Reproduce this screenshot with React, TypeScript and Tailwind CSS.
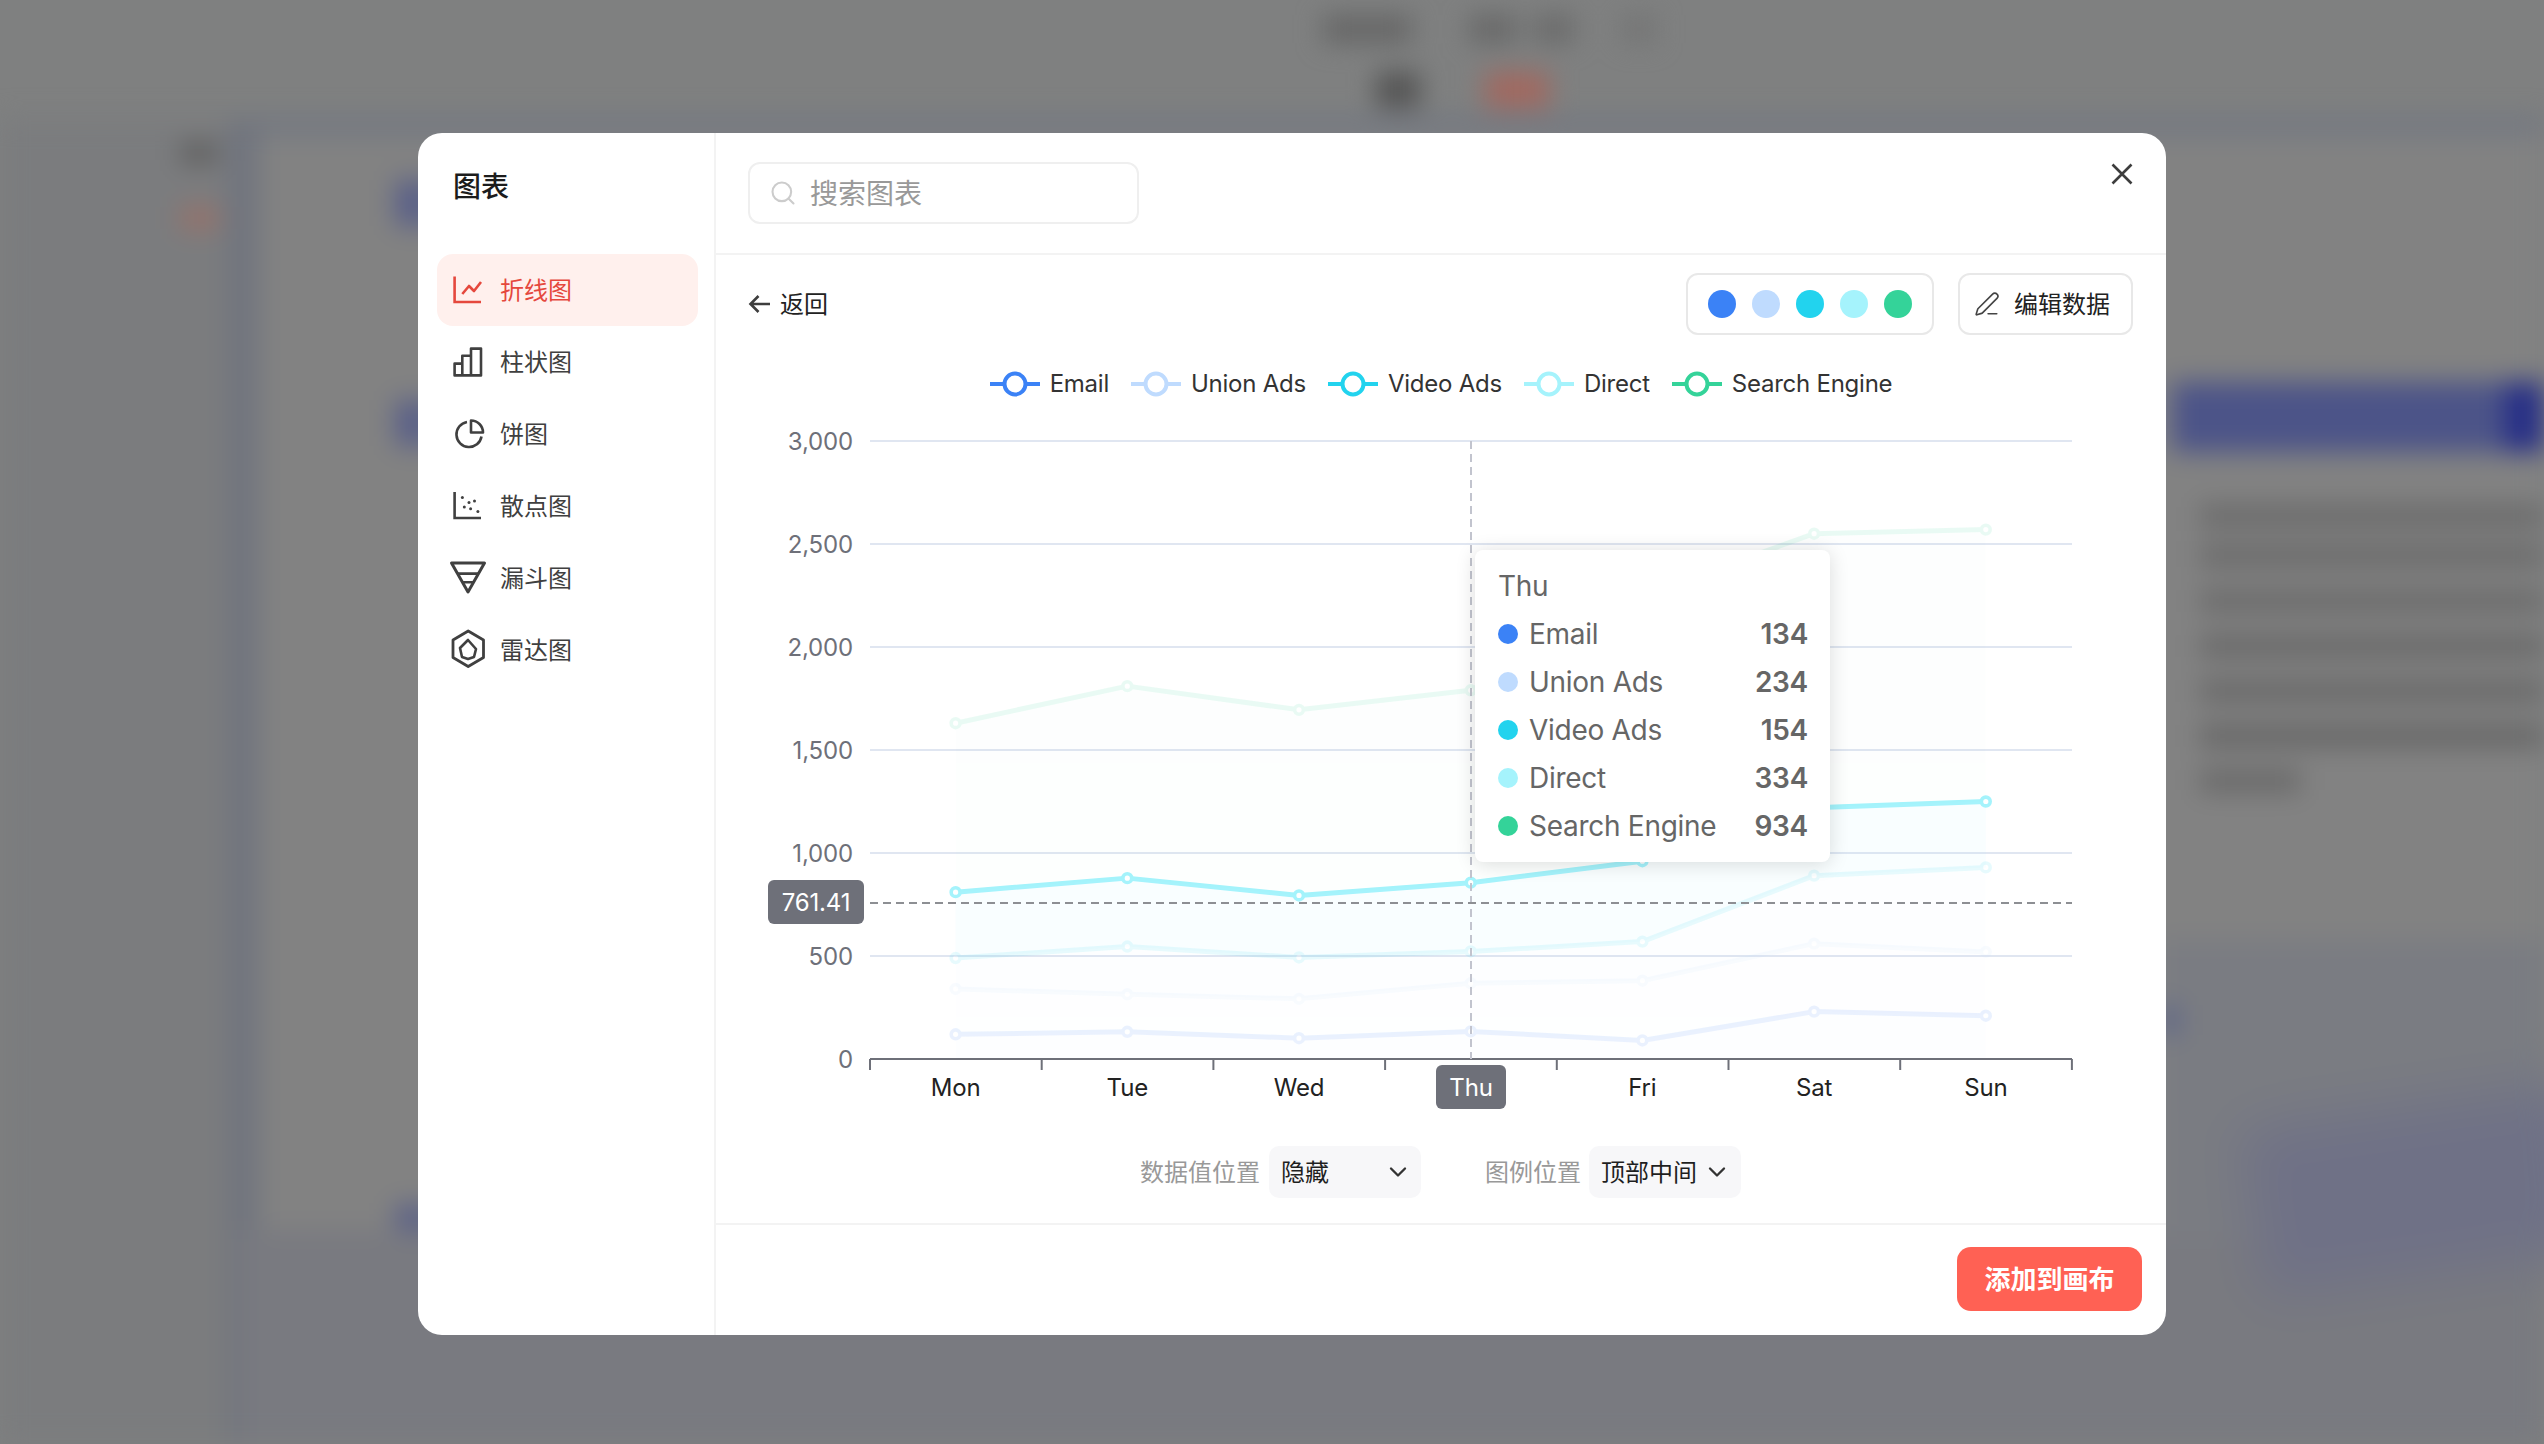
import { ChevronDown, PenLine, Search } from "lucide-react";

const days = ["Mon", "Tue", "Wed", "Thu", "Fri", "Sat", "Sun"];

const series = [
  { name: "Email", color: "#3b82f6", dot: "bg-[#3b82f6]", values: [120, 132, 101, 134, 90, 230, 210], tip: 134 },
  { name: "Union Ads", color: "#bfdbfe", dot: "bg-[#bfdbfe]", values: [220, 182, 191, 234, 290, 330, 310], tip: 234 },
  { name: "Video Ads", color: "#22d3ee", dot: "bg-[#22d3ee]", values: [150, 232, 201, 154, 190, 330, 410], tip: 154 },
  { name: "Direct", color: "#a5f3fc", dot: "bg-[#a5f3fc]", values: [320, 332, 301, 334, 390, 330, 320], tip: 334 },
  { name: "Search Engine", color: "#34d399", dot: "bg-[#34d399]", values: [820, 932, 901, 934, 1290, 1330, 1320], tip: 934 },
];

const xAt = (i: number) => 955.6 + i * 171.7;
const yAt = (v: number) => 1059 - v * 0.206;

// stacked totals per series
const stacked = series.map((_, s) =>
  days.map((_, d) => series.slice(0, s + 1).reduce((sum, row) => sum + row.values[d], 0))
);

function Chart() {
  return (
    <svg width={1450} height={720} viewBox="716 420 1450 720" className="block tracking-[-0.01em]">
      {[0, 500, 1000, 1500, 2000, 2500, 3000].map((v) => (
        <g key={v}>
          {v > 0 && <line x1={870} x2={2072} y1={yAt(v)} y2={yAt(v)} stroke="#e0e6f1" strokeWidth={2} />}
          <text x={853} y={yAt(v)} dy="0.36em" textAnchor="end" fontSize={24} fill="#6e7079">
            {v.toLocaleString("en-US")}
          </text>
        </g>
      ))}

      {series.map((row, s) => {
        const top = stacked[s].map((v, d) => `${xAt(d)},${yAt(v)}`);
        const bottom = s === 0
          ? [`${xAt(6)},${yAt(0)}`, `${xAt(0)},${yAt(0)}`]
          : stacked[s - 1].map((v, d) => `${xAt(d)},${yAt(v)}`).reverse();
        const active = row.name === "Direct";
        return (
          <g key={row.name} opacity={active ? 1 : 0.1}>
            <polygon points={[...top, ...bottom].join(" ")} fill={row.color} fillOpacity={active ? 0.07 : 0.08} />
            <polyline points={top.join(" ")} fill="none" stroke={row.color} strokeWidth={5} strokeLinejoin="round" />
            {stacked[s].map((v, d) => (
              <circle key={d} cx={xAt(d)} cy={yAt(v)} r={4.4} fill="#fff" stroke={row.color} strokeWidth={3.6} />
            ))}
          </g>
        );
      })}

      <line x1={870} x2={2072} y1={1059} y2={1059} stroke="#6e7079" strokeWidth={2} />
      {[0, 1, 2, 3, 4, 5, 6, 7].map((i) => (
        <line key={i} x1={870 + i * 171.7} x2={870 + i * 171.7} y1={1059} y2={1070} stroke="#6e7079" strokeWidth={2} />
      ))}

      <line x1={1471} x2={1471} y1={441} y2={1059} stroke="#c2c4ce" strokeWidth={2} strokeDasharray="8 5" />
      <line x1={870} x2={2072} y1={903} y2={903} stroke="#8d8f93" strokeWidth={2} strokeDasharray="8 5" />

      {days.map((day, i) =>
        day === "Thu" ? null : (
          <text key={day} x={xAt(i)} y={1087} dy="0.36em" textAnchor="middle" fontSize={24} fill="#222">
            {day}
          </text>
        )
      )}

      <rect x={768} y={880} width={96} height={44} rx={6} fill="#6e7079" />
      <text x={816} y={902} dy="0.36em" textAnchor="middle" fontSize={24} fill="#fff">761.41</text>
      <rect x={1436} y={1065} width={70} height={44} rx={6} fill="#6e7079" />
      <text x={1471} y={1087} dy="0.36em" textAnchor="middle" fontSize={24} fill="#fff">Thu</text>
    </svg>
  );
}

function LegendMark({ color }: { color: string }) {
  return (
    <svg width={50} height={28} viewBox="0 0 50 28">
      <line x1={0} x2={50} y1={14} y2={14} stroke={color} strokeWidth={4} />
      <circle cx={25} cy={14} r={10.5} fill="#fff" stroke={color} strokeWidth={4} />
    </svg>
  );
}

function NavIcon({ name }: { name: string }) {
  const shared = {
    width: 36,
    height: 36,
    viewBox: "0 0 36 36",
    fill: "none",
    stroke: "currentColor",
    strokeWidth: 2.6,
    className: "shrink-0 overflow-visible",
  };
  if (name === "line") {
    return (
      <svg {...shared}>
        <path d="M4.6 4.4V30H31" />
        <path d="M12.3 22L19 14L24 19L31 10" strokeLinejoin="round" />
      </svg>
    );
  }
  if (name === "bar") {
    return (
      <svg {...shared} strokeLinejoin="round">
        <path d="M4.6 19.6h7.7v11.8H4.6zM12.3 11.7H21v19.7h-8.7zM21 4.6h10v26.8H21z" />
      </svg>
    );
  }
  if (name === "pie") {
    return (
      <svg {...shared} strokeLinejoin="round">
        <path d="M17 6A12.6 12.6 0 1 0 31.5 20.5" />
        <path d="M21 4.5V16.5H33A12 12 0 0 0 21 4.5Z" />
      </svg>
    );
  }
  if (name === "scatter") {
    return (
      <svg {...shared}>
        <path d="M4.6 4V30H31" />
        <g fill="currentColor" stroke="none">
          <circle cx={12.4} cy={9.4} r={1.5} />
          <circle cx={19} cy={14.4} r={1.5} />
          <circle cx={24.5} cy={13} r={1.5} />
          <circle cx={14.3} cy={19} r={1.5} />
          <circle cx={20.6} cy={20.8} r={1.5} />
          <circle cx={27.9} cy={23.6} r={1.5} />
        </g>
      </svg>
    );
  }
  if (name === "funnel") {
    return (
      <svg {...shared} strokeLinejoin="round">
        <path d="M1.5 3H34.5L18 32Z" strokeWidth={3} />
        <path d="M7.5 13.6H28.7M12.4 22.2H23.6" />
      </svg>
    );
  }
  return (
    <svg {...shared} strokeLinejoin="round">
      <path d="M18.2 -1L33.5 8V25.5L18.2 34.5L3 25.5V8Z" strokeWidth={2.8} />
      <path d="M18 8L26 17L24 25L18 27L12 25L10 16Z" />
    </svg>
  );
}

const navItems = [
  { id: "line", label: "折线图" },
  { id: "bar", label: "柱状图" },
  { id: "pie", label: "饼图" },
  { id: "scatter", label: "散点图" },
  { id: "funnel", label: "漏斗图" },
  { id: "radar", label: "雷达图" },
];

function BlurredPage() {
  return (
    <div className="absolute inset-0 flex flex-col blur-[13px]">
      <div className="h-[118px] shrink-0" />
      <div className="flex min-h-0 flex-1">
        <div className="w-[228px] bg-[#7b7c7e]" />
        <div className="w-[30px] bg-[#70747e]" />
        <div className="flex-1 flex-col bg-[#828282]">
          <div className="h-[16px] bg-[#717681]" />
        </div>
      </div>

      {/* what sits behind the dialog, only the blur of it shows */}
      <div className="absolute top-[15px] left-[1323px] h-[28px] w-[89px] bg-[#666666]" />
      <div className="absolute top-[15px] left-[1469px] h-[28px] w-[48px] bg-[#686868]" />
      <div className="absolute top-[15px] left-[1534px] h-[28px] w-[40px] bg-[#6a6a6a]" />
      <div className="absolute top-[15px] left-[1623px] h-[28px] w-[32px] bg-[#747474]" />
      <div className="absolute top-[72px] left-[1376px] h-[36px] w-[44px] bg-[#545454]" />
      <div className="absolute top-[72px] left-[1485px] h-[36px] w-[64px] bg-[#a2685f]" />
      <div className="absolute top-[143px] left-[180px] h-[20px] w-[38px] bg-[#5e5e5e]" />
      <div className="absolute top-[206px] left-[180px] h-[24px] w-[38px] bg-[#96726a]" />
      <div className="absolute top-[180px] left-[395px] h-[46px] w-[40px] bg-[#5a6088]" />
      <div className="absolute top-[400px] left-[395px] h-[46px] w-[40px] bg-[#5a6088]" />
      <div className="absolute top-[1205px] left-[395px] h-[28px] w-[40px] bg-[#5a6088]" />
      <div className="absolute top-[1230px] right-0 left-[240px] h-[214px] bg-[#797a80]" />
      <div className="absolute top-[940px] right-0 left-[2160px] h-[300px] bg-[#7a7c82]" />
      <div className="absolute top-[1105px] left-[2250px] h-[170px] w-[340px] -rotate-[8deg] bg-[#6f7186] blur-[24px]" />
      <div className="absolute top-[1005px] left-[2160px] h-[30px] w-[18px] bg-[#5a6288]" />
      <div className="absolute top-[382px] right-0 left-[2172px] h-[70px] bg-[#4c5488]" />
      <div className="absolute top-[382px] right-0 left-[2505px] h-[70px] bg-[#262e86]" />
      <div className="absolute top-[505px] right-0 left-[2200px] h-[22px] bg-[#6a6a6a]" />
      <div className="absolute top-[545px] right-0 left-[2200px] h-[22px] bg-[#6a6a6a]" />
      <div className="absolute top-[590px] right-0 left-[2200px] h-[22px] bg-[#6a6a6a]" />
      <div className="absolute top-[635px] right-0 left-[2200px] h-[22px] bg-[#686868]" />
      <div className="absolute top-[680px] right-0 left-[2200px] h-[22px] bg-[#686868]" />
      <div className="absolute top-[725px] right-0 left-[2200px] h-[22px] bg-[#666666]" />
      <div className="absolute top-[770px] left-[2200px] h-[22px] w-[100px] bg-[#686868]" />
    </div>
  );
}

export default function App() {
  return (
    <div className="relative h-screen w-screen overflow-hidden bg-[#7f8080] font-['Inter','Noto_Sans_CJK_SC',sans-serif]">
      <BlurredPage />

      <div className="absolute inset-0 pt-[133px] pl-[418px]">
        <div className="flex h-[1202px] w-[1748px] overflow-hidden rounded-[24px] bg-white">
          {/* sidebar */}
          <div className="w-[298px] shrink-0 border-r-2 border-[#f3f3f3] pr-[16px] pl-[19px]">
            <div className="flex h-[121px] items-center pb-[14px] pl-[16px] text-[28px] font-medium text-[#1c1c1c]">
              图表
            </div>
            <div className="flex flex-col">
              {navItems.map((item) => (
                <div
                  key={item.id}
                  className={
                    item.id === "line"
                      ? "flex h-[72px] items-center gap-[14px] rounded-[16px] bg-[#fff0ed] pl-[13px] text-[24px] text-[#e5483d]"
                      : "flex h-[72px] items-center gap-[14px] rounded-[16px] pl-[13px] text-[24px] text-[#404040]"
                  }
                >
                  <NavIcon name={item.id} />
                  <span className="pt-[2px]">{item.label}</span>
                </div>
              ))}
            </div>
          </div>

          {/* main column */}
          <div className="flex min-w-0 flex-1 flex-col">
            <div className="flex h-[122px] shrink-0 items-start justify-between border-b-2 border-[#f3f3f3] pt-[29px] pr-[33px] pl-[32px]">
              <div className="flex h-[62px] w-[391px] items-center gap-[13px] rounded-[12px] border-2 border-[#efefef] pl-[19px] text-[28px] text-[#999]">
                <Search size={28} strokeWidth={1.8} className="text-[#ccc]" />
                <span className="pt-[2px]">搜索图表</span>
              </div>
              <svg width={22} height={22} viewBox="0 0 22 22" className="mt-[1px] text-[#3d3d3d]">
                <path d="M1.5 1.5L20.5 20.5M20.5 1.5L1.5 20.5" stroke="currentColor" strokeWidth={2.6} fill="none" />
              </svg>
            </div>

            <div className="mt-[18px] flex h-[62px] shrink-0 items-center justify-between pr-[33px] pl-[32px]">
              <div className="flex items-center gap-[10px] text-[24px] text-[#222]">
                <svg width={22} height={20} viewBox="0 0 22 20" fill="none" stroke="#3d3d3d" strokeWidth={2.6}>
                  <path d="M22 10H2.5M10.5 2L2.5 10L10.5 18" />
                </svg>
                <span className="pt-[2px]">返回</span>
              </div>
              <div className="flex items-center gap-[24px]">
                <div className="flex h-[62px] w-[248px] items-center justify-center gap-[16px] rounded-[12px] border-2 border-[#e8e8e8]">
                  {series.map((row) => (
                    <span key={row.name} className={`h-[28px] w-[28px] rounded-full ${row.dot}`} />
                  ))}
                </div>
                <div className="flex h-[62px] w-[175px] items-center gap-[14px] rounded-[12px] border-2 border-[#e8e8e8] pl-[14px] text-[24px] text-[#222]">
                  <PenLine size={26} strokeWidth={1.5} className="text-[#444]" />
                  <span className="pt-[2px]">编辑数据</span>
                </div>
              </div>
            </div>

            <div className="mt-[25px] flex h-[48px] shrink-0 items-center justify-center gap-[22px] text-[24px] tracking-[-0.01em] text-[#333]">
              {series.map((row) => (
                <div key={row.name} className="flex items-center gap-[10px]">
                  <LegendMark color={row.color} />
                  <span>{row.name}</span>
                </div>
              ))}
            </div>

            <div className="relative mt-[12px] h-[720px] shrink-0">
              <Chart />
              <div className="absolute top-[130px] left-[759px] flex h-[312px] w-[355px] flex-col rounded-[8px] bg-white py-[12px] pr-[22px] pl-[23px] text-[28px] tracking-[-0.01em] text-[#666] shadow-[0_2px_20px_rgba(0,0,0,0.14)]">
                <div className="flex h-[48px] items-center">Thu</div>
                {series.map((row) => (
                  <div key={row.name} className="flex h-[48px] items-center">
                    <span className={`mr-[11px] h-[20px] w-[20px] rounded-full ${row.dot}`} />
                    <span className="flex-1">{row.name}</span>
                    <span className="font-semibold">{row.tip}</span>
                  </div>
                ))}
              </div>
            </div>

            <div className="mt-[6px] flex h-[52px] shrink-0 items-center pl-[424px] text-[24px]">
              <span className="mr-[9px] pt-[2px] text-[#999]">数据值位置</span>
              <div className="flex h-[52px] w-[152px] items-center justify-between rounded-[10px] bg-[#f7f7f9] pr-[9px] pl-[12px] text-[#1f1f1f]">
                <span className="pt-[2px]">隐藏</span>
                <ChevronDown size={28} strokeWidth={2} className="text-[#333]" />
              </div>
              <span className="mr-[8px] ml-[64px] pt-[2px] text-[#999]">图例位置</span>
              <div className="flex h-[52px] w-[152px] items-center rounded-[10px] bg-[#f7f7f9] pl-[12px] text-[#1f1f1f]">
                <span className="pt-[2px]">顶部中间</span>
                <ChevronDown size={28} strokeWidth={2} className="ml-[6px] text-[#333]" />
              </div>
            </div>

            <div className="mt-[25px] flex flex-1 items-start justify-end border-t-2 border-[#f3f3f3] pt-[22px] pr-[24px]">
              <div className="flex h-[64px] w-[185px] items-center justify-center rounded-[14px] bg-[#ff6154] pt-[1px] text-[26px] font-bold text-white">
                添加到画布
              </div>
            </div>
          </div>
        </div>
      </div>
    </div>
  );
}
